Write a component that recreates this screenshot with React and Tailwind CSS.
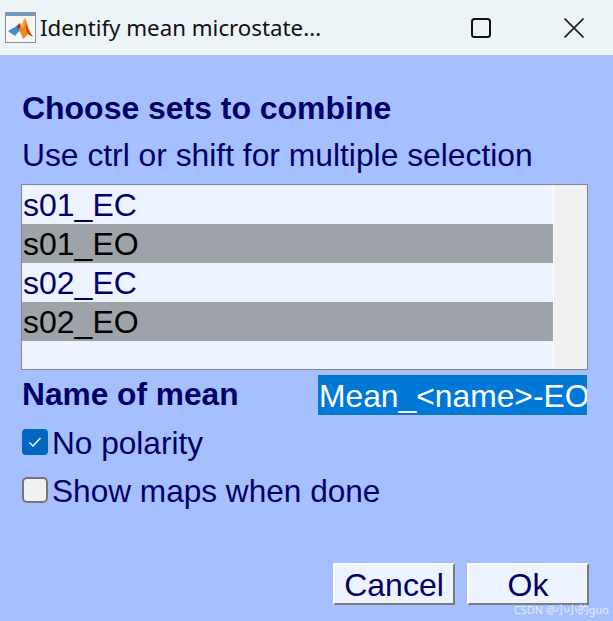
import React from 'react';

const NAVY = 'text-[#000066]';

// small matlab membrane logo inside the window icon
const MatlabIcon = () => (
  <svg width="31" height="31" viewBox="0 0 31 31" className="shrink-0">
    <rect x="0.5" y="0.5" width="30" height="30" fill="#f6f6f6" stroke="#8a9299" />
    <rect x="1" y="1" width="29" height="3" fill="#6f9cc4" />
    <path d="M3 19 L11 14.5 L15 18 L10 24 Z" fill="#3a8fd6" />
    <path d="M11 14.5 L15 11 L16 15 L14 18 Z" fill="#9a3b22" />
    <path d="M20 6 C22 10 24 19 28 25 L23 22 L18 27 C17 23 15 20 13.5 18 C16 15 18 9 20 6 Z" fill="#ee8a25" />
    <path d="M20 6 C18 9 17 13 15.5 16 L19 15 Z" fill="#f4b42f" />
    <path d="M21 11 C22 15 24 20 28 25 L23 22 L21 17 Z" fill="#c9401f" />
  </svg>
);

const ListRow = ({ label, selected }) => (
  <div
    className={`h-[39px] pl-px text-[32px] leading-[41px] ${selected ? 'bg-[#9ea3a9] text-black' : NAVY}`}
  >
    {label}
  </div>
);

const CheckRow = ({ label, checked, className }) => (
  <div className={`flex items-center ${className}`}>
    {checked ? (
      <div className="flex h-[26px] w-[26px] items-center justify-center rounded-[4px] bg-[#0067c0]">
        <svg width="14" height="12" viewBox="0 0 14 12" fill="none" stroke="white" strokeWidth="1.4">
          <path d="M1.5 6.5 L5 10 L12.5 2" />
        </svg>
      </div>
    ) : (
      <div className="h-[26px] w-[26px] rounded-[5px] border-2 border-[#757575] bg-[#f1f1f1]" />
    )}
    <span className={`ml-[4px] h-[36px] text-[31.6px] leading-[38px] ${NAVY}`}>{label}</span>
  </div>
);

const PushButton = ({ label }) => (
  <button className={`h-[42px] w-[122px] border-t-2 border-l-2 border-t-white border-l-white border-r-2 border-b-2 border-r-[#7d7d7d] border-b-[#7d7d7d] bg-[#edf4ff] pt-[2px] text-[32px] leading-[36px] ${NAVY}`}>
    {label}
  </button>
);

export default function App() {
  return (
    <div className="relative h-[621px] w-[613px] overflow-hidden bg-[#a6c0ff] font-['Liberation_Sans',sans-serif]">
      {/* title bar */}
      <div className="flex h-[55px] items-center bg-[#edf4f8] pl-[5px]">
        <MatlabIcon />
        <span className="ml-[4px] font-['Noto_Sans',sans-serif] text-[22.3px] text-[#111]">Identify mean microstate...</span>
        <svg width="20" height="20" viewBox="0 0 20 20" fill="none" stroke="#111" strokeWidth="2" className="ml-auto">
          <rect x="1" y="1" width="18" height="18" rx="2.5" />
        </svg>
        <svg width="20" height="20" viewBox="0 0 20 20" fill="none" stroke="#222" strokeWidth="1.7" className="mr-[29px] ml-[73px]">
          <path d="M0.5 0.5 L19.5 19.5 M19.5 0.5 L0.5 19.5" />
        </svg>
      </div>

      <div className="px-[22px] pt-[36px]">
        <div className={`text-[32px] font-bold leading-[34px] tracking-[-0.03px] ${NAVY}`}>Choose sets to combine</div>
        <div className={`mt-[13px] text-[31.8px] leading-[34px] ${NAVY}`}>Use ctrl or shift for multiple selection</div>

        {/* listbox */}
        <div className="mt-[12px] -ml-px flex h-[186px] w-[567px] border border-[#85858f] bg-[#edf4ff]">
          <div className="flex-1">
            <ListRow label="s01_EC" />
            <ListRow label="s01_EO" selected />
            <ListRow label="s02_EC" />
            <ListRow label="s02_EO" selected />
          </div>
          <div className="w-[34px] border-l border-l-white bg-[#f0f0f0]" />
        </div>

        <div className="mt-[4px] flex items-center justify-between pr-[3px]">
          <span className={`h-[42px] text-[31.7px] font-bold leading-[40px] ${NAVY}`}>Name of mean</span>
          <div className="h-[42px] w-[271px] overflow-hidden border border-[#b8c0cc] bg-[#0078d7] pl-px text-[31.8px] leading-[42px] whitespace-nowrap text-white">
            Mean_&lt;name&gt;-EO
          </div>
        </div>

        <CheckRow label="No polarity" checked className="mt-[8px]" />
        <CheckRow label="Show maps when done" className="mt-[12px]" />

        <div className="mt-[55px] flex justify-end gap-[12px] pr-[2px]">
          <PushButton label="Cancel" />
          <PushButton label="Ok" />
        </div>
      </div>

      {/* site watermark */}
      <span className="absolute right-[4px] bottom-[3px] font-['Noto_Sans','Noto_Sans_CJK_SC',sans-serif] text-[11px] text-white/70">CSDN @小小的guo</span>
    </div>
  );
}
